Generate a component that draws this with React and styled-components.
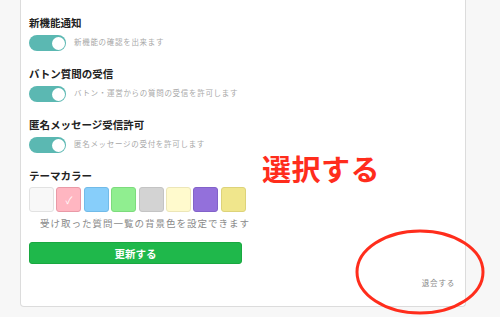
import React from "react";
import styled, { createGlobalStyle } from "styled-components";

const GlobalStyle = createGlobalStyle`
  html, body {
    margin: 0;
    padding: 0;
    background: #f7f7f7;
    font-family: "Noto Sans CJK JP", "Noto Sans", sans-serif;
    overflow: hidden;
  }
`;

const Page = styled.div`
  position: relative;
  width: 500px;
  height: 317px;
  padding: 0 34px 0 20px;
  box-sizing: border-box;
`;

const Card = styled.div`
  background: #fff;
  border: 1px solid #dcdcdc;
  border-top: none;
  border-radius: 0 0 4px 4px;
  height: 307px;
  box-sizing: border-box;
  padding: 15.5px 8px 0 8px;
  position: relative;
`;

const Section = styled.div`
  margin-bottom: 15.5px;
`;

const Title = styled.div`
  font-size: 10.5px;
  font-weight: 700;
  color: #222;
  line-height: 14px;
`;

const Row = styled.div`
  display: flex;
  align-items: center;
  gap: 8px;
  margin-top: 5.5px;
  height: 16px;
`;

const Toggle = styled.div`
  width: 37px;
  height: 16px;
  border-radius: 8px;
  background: #5bb8b2;
  display: flex;
  align-items: center;
  justify-content: flex-end;
  padding: 0 1.5px;
  box-sizing: border-box;
`;

const Knob = styled.div`
  width: 13px;
  height: 13px;
  border-radius: 50%;
  background: #fff;
`;

const Desc = styled.div`
  font-size: 7.5px;
  line-height: 10px;
  color: #a8a8a8;
  letter-spacing: 0.7px;
  margin-top: -3px;
`;

const Swatches = styled.div`
  display: flex;
  gap: 2.4px;
  margin-top: 4.5px;
`;

const Swatch = styled.div`
  width: 25px;
  height: 25px;
  border-radius: 3px;
  background: ${(p) => p.color};
  border: 1px solid ${(p) => p.edge};
  box-sizing: border-box;
  display: flex;
  align-items: center;
  justify-content: center;
  color: #fff;
  font-size: 10px;
`;

const Hint = styled.div`
  font-size: 9.5px;
  line-height: 12px;
  color: #8a8a8a;
  letter-spacing: 1px;
  margin: 5px 0 0 11px;
`;

const Button = styled.div`
  width: 213px;
  height: 22px;
  margin-top: 13px;
  background: #1fb84b;
  border: 1px solid #19a840;
  border-radius: 3px;
  box-sizing: border-box;
  color: #fff;
  font-size: 10.5px;
  font-weight: 700;
  display: flex;
  align-items: center;
  justify-content: center;
`;

const Leave = styled.div`
  position: absolute;
  right: 10px;
  bottom: 18px;
  font-size: 7.5px;
  color: #888;
  letter-spacing: 0.8px;
`;

const Annotation = styled.div`
  position: absolute;
  left: 262px;
  top: 147px;
  font-size: 29px;
  font-weight: 700;
  color: #ff2d1c;
  letter-spacing: 0.5px;
`;

const Ellipse = styled.svg`
  position: absolute;
  left: 354px;
  top: 228px;
  overflow: visible;
`;

const swatches = [
  { color: "#f8f8f8", edge: "#e2e2e2" },
  { color: "#ffb6c1", edge: "#e99aa7", checked: true },
  { color: "#87cefa", edge: "#72bbe8" },
  { color: "#90ee90", edge: "#7ddb7d" },
  { color: "#d3d3d3", edge: "#c4c4c4" },
  { color: "#fffacd", edge: "#ece6b8" },
  { color: "#9370db", edge: "#8262c9" },
  { color: "#f0e68c", edge: "#ddd37a" },
];

const settings = [
  { title: "新機能通知", desc: "新機能の確認を出来ます" },
  { title: "バトン質問の受信", desc: "バトン・運営からの質問の受信を許可します" },
  { title: "匿名メッセージ受信許可", desc: "匿名メッセージの受付を許可します" },
];

export default function App() {
  return (
    <>
      <GlobalStyle />
      <Page>
        <Card>
          {settings.map((s) => (
            <Section key={s.title}>
              <Title>{s.title}</Title>
              <Row>
                <Toggle>
                  <Knob />
                </Toggle>
                <Desc>{s.desc}</Desc>
              </Row>
            </Section>
          ))}
          <Title>テーマカラー</Title>
          <Swatches>
            {swatches.map((s) => (
              <Swatch key={s.color} color={s.color} edge={s.edge}>
                {s.checked ? "✓" : null}
              </Swatch>
            ))}
          </Swatches>
          <Hint>受け取った質問一覧の背景色を設定できます</Hint>
          <Button>更新する</Button>
          <Leave>退会する</Leave>
        </Card>
        <Annotation>選択する</Annotation>
        <Ellipse width="132" height="88" viewBox="0 0 132 88">
          <ellipse cx="66" cy="44" rx="63" ry="41" fill="none" stroke="#ff2d1c" strokeWidth="3" />
        </Ellipse>
      </Page>
    </>
  );
}
